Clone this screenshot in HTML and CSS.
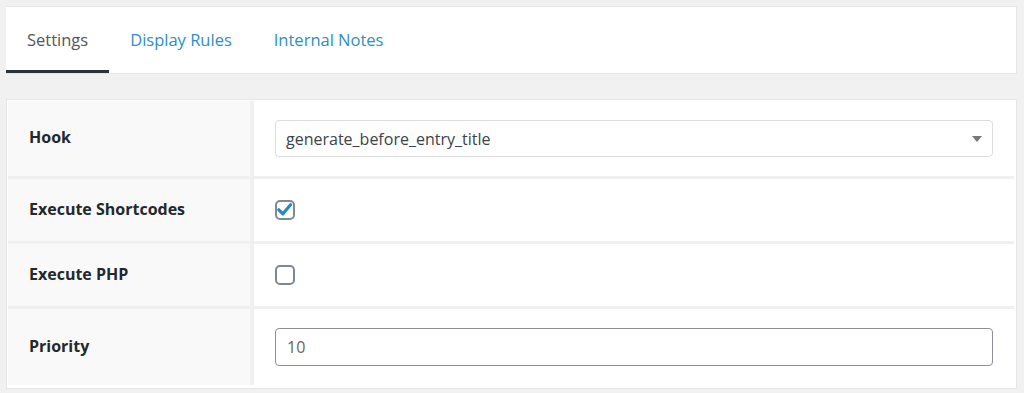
FILE: index.html
```html
<!DOCTYPE html>
<html>
<head>
<meta charset="utf-8">
<link rel="stylesheet" href="styles.css">
</head>
<body>
<div class="page">
  <div class="tabs">
    <a class="tab active">Settings</a>
    <a class="tab">Display Rules</a>
    <a class="tab">Internal Notes</a>
  </div>
  <div class="panel">
    <div class="grid">
      <div class="label">Hook</div>
      <div class="value">
        <div class="select">
          <span>generate_before_entry_title</span>
          <span class="arrow"></span>
        </div>
      </div>
      <div class="label">Execute Shortcodes</div>
      <div class="value">
        <span class="checkbox checked">
          <svg viewBox="0 0 20 20" width="20" height="20"><path d="M3.8 9.8 L7.9 13.8 L15.6 4.8" fill="none" stroke="#1e8cbe" stroke-width="3.2" stroke-linecap="round" stroke-linejoin="round"/></svg>
        </span>
      </div>
      <div class="label">Execute PHP</div>
      <div class="value"><span class="checkbox"></span></div>
      <div class="label">Priority</div>
      <div class="value">
        <div class="input">10</div>
      </div>
    </div>
  </div>
</div>
</body>
</html>
```

FILE: styles.css
```css
html, body {
  margin: 0;
  padding: 0;
  background: #f1f1f1;
  font-family: "Open Sans", "Noto Sans", sans-serif;
}
.page {
  padding: 6px 7px 0 6px;
}
.tabs {
  display: flex;
  background: #fff;
  border: 1px solid #e6e6e6;
  border-left: none;
  box-sizing: border-box;
  height: 68px;
  align-items: stretch;
}
.tab {
  display: flex;
  align-items: center;
  padding: 1px 21px 0 21px;
  font-size: 16.5px;
  color: #2e8fc4;
  border-bottom: 3px solid transparent;
  cursor: pointer;
}
.tab.active {
  color: #50575e;
  border-bottom-color: #2c3338;
}
.panel {
  margin-top: 25px;
  background: #fff;
  border: 1px solid #e6e6e6;
  padding: 1px 2px 3px 1px;
}
.grid {
  display: grid;
  grid-template-columns: 242px 1fr;
  gap: 3px 4px;
  background: #f0f0f0;
}
.label {
  background: #f9f9f9;
  display: flex;
  align-items: center;
  padding: 0 21px 3px 21px;
  font-size: 16px;
  font-weight: 700;
  color: #23282d;
}
.value {
  background: #fff;
  padding: 19px 21px;
  display: flex;
  align-items: center;
}
.select {
  flex: 1;
  height: 37px;
  box-sizing: border-box;
  border: 1px solid #dcdcdc;
  border-radius: 4px;
  display: flex;
  align-items: center;
  justify-content: space-between;
  padding: 0 10px 0 10px;
  font-size: 16px;
  color: #3c434a;
}
.arrow {
  width: 0;
  height: 0;
  border-left: 5px solid transparent;
  border-right: 5px solid transparent;
  border-top: 6px solid #777;
  margin-top: 1px;
}
.checkbox {
  width: 20px;
  height: 20px;
  box-sizing: border-box;
  border: 2px solid #7e8993;
  border-radius: 5px;
  margin: 2px 0;
  display: flex;
  align-items: center;
  justify-content: center;
  background: #fff;
}
.checkbox svg {
  display: block;
  flex: none;
}
.input {
  flex: 1;
  height: 38px;
  box-sizing: border-box;
  border: 1.5px solid #8c8f94;
  border-radius: 4px;
  display: flex;
  align-items: center;
  padding: 0 11px;
  font-size: 16px;
  color: #666;
}
```
